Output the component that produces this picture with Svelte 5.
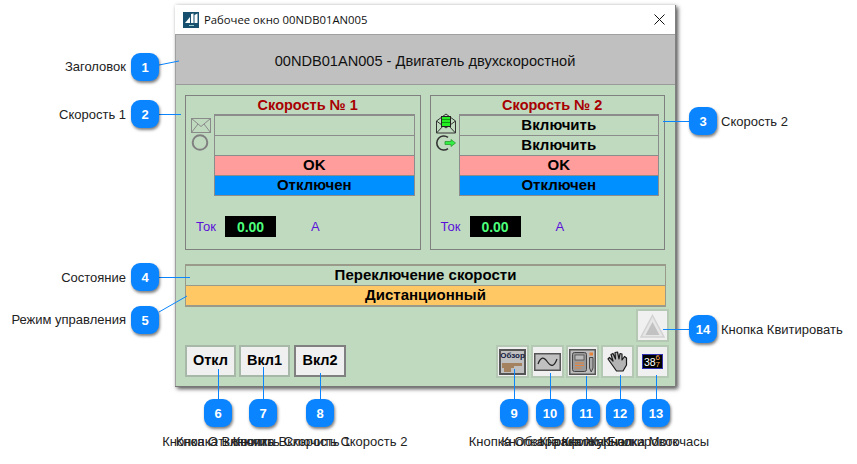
<script lang="ts">
  const speeds = [
    { title: 'Скорость № 1', rows: ['', ''], active: false },
    { title: 'Скорость № 2', rows: ['Включить', 'Включить'], active: true },
  ];

  const badges = [
    { n: 1, x: 145, y: 67 }, { n: 2, x: 145, y: 114 }, { n: 3, x: 703, y: 121 },
    { n: 4, x: 145, y: 277 }, { n: 5, x: 145, y: 320 }, { n: 6, x: 218, y: 413 },
    { n: 7, x: 263, y: 413 }, { n: 8, x: 320, y: 413 }, { n: 9, x: 514, y: 413 },
    { n: 10, x: 550, y: 413 }, { n: 11, x: 586, y: 413 }, { n: 12, x: 620, y: 413 },
    { n: 13, x: 656, y: 413 }, { n: 14, x: 703, y: 329 },
  ];

  const leaders = [
    [159, 65, 179, 61], [159, 114.5, 181, 114.5], [689, 121.5, 663, 121.5],
    [159, 277.5, 190, 277.5], [159, 312, 187, 296], [218.5, 399, 218.5, 369],
    [263.5, 399, 263.5, 367], [320.5, 399, 320.5, 373], [514.5, 399, 514.5, 369],
    [550.5, 399, 550.5, 373], [586.5, 399, 586.5, 376], [620.5, 399, 620.5, 375],
    [656.5, 399, 656.5, 375], [689, 329.5, 663, 329.5],
  ];

  const sideLabels = [
    { text: 'Заголовок', right: 731, y: 67 },
    { text: 'Скорость 1', right: 731, y: 115 },
    { text: 'Состояние', right: 731, y: 278 },
    { text: 'Режим управления', right: 731, y: 320 },
  ];

  const bottomLabels = [
    { text: 'Кнопка Отключить', x: 218 },
    { text: 'Кнопка Включить Скорость 1', x: 263 },
    { text: 'Кнопка Включить Скорость 2', x: 320 },
    { text: 'Кнопка Обзора', x: 514 },
    { text: 'Кнопка Графики', x: 550 },
    { text: 'Кнопка Журнал', x: 586 },
    { text: 'Кнопка Блокировок', x: 620 },
    { text: 'Кнопка Моточасы', x: 656 },
  ];
</script>

<div class="page">
  <div class="window">
    <div class="titlebar">
      <svg class="app-icon" viewBox="0 0 16 16" aria-hidden="true">
        <rect width="16" height="16" fill="#17506f" />
        <path d="M2 11 L7 5 V11 Z M8 11 V2 L10.5 1.500 V11 Z M11.5 11 V3 L14.500 1.500 V11 Z" fill="#fff" />
        <rect x="6" y="13" width="5" height="1" fill="#9cc" />
      </svg>
      <span class="title-text">Рабочее окно 00NDB01AN005</span>
      <svg class="close" viewBox="0 0 11 11" aria-hidden="true">
        <path d="M0.5 0.5 L10.5 10.5 M10.5 0.5 L0.5 10.5" stroke="#111" stroke-width="1" fill="none" />
      </svg>
    </div>

    <div class="header">00NDB01AN005 - Двигатель двухскоростной</div>

    <div class="body">
      <div class="panels">
        {#each speeds as s}
          <section class="panel">
            <h2>{s.title}</h2>
            <div class="panel-main">
              <div class="icons">
                {#if s.active}
                  <svg class="mail-on" width="22" height="21" viewBox="0 0 22 21" aria-hidden="true">
                    <path d="M1.500 8 L11 1 L20.500 8 V20 H1.500 Z M1.500 20 L9 12 M20.500 20 L13 12 M1.500 8 L11 15 L20.500 8" fill="none" stroke="#333" stroke-width="1" />
                    <rect x="6.500" y="3.500" width="9" height="10" fill="#22ee22" stroke="#222" />
                    <path d="M7 6.500 H15 M7 9.500 H15" stroke="#119911" />
                  </svg>
                  <svg class="run-on" width="22" height="16" viewBox="0 0 22 16" aria-hidden="true">
                    <path d="M13 2.400 A7 7 0 1 0 13 13.600" fill="none" stroke="#333" stroke-width="1.600" />
                    <path d="M10 6.500 H16 V4.500 L20.500 8 L16 11.500 V9.500 H10 Z" fill="#33ee44" stroke="#2a9a2a" stroke-width="0.800" />
                  </svg>
                {:else}
                  <svg width="22" height="16" viewBox="0 0 22 16" aria-hidden="true">
                    <rect x="1.500" y="0.500" width="19" height="14" fill="none" stroke="#8a8a8a" />
                    <path d="M1.500 0.500 L11 8.500 L20.500 0.500 M1.500 14.500 L8 6 M20.500 14.500 L14 6" fill="none" stroke="#8a8a8a" />
                  </svg>
                  <svg class="circle" width="18" height="17" viewBox="0 0 18 17" aria-hidden="true">
                    <circle cx="9" cy="8.500" r="7.300" fill="none" stroke="#808080" stroke-width="2" />
                  </svg>
                {/if}
              </div>
              <div class="rows">
                {#each s.rows as r}
                  <div class="row">{r}</div>
                {/each}
                <div class="row ok">OK</div>
                <div class="row off">Отключен</div>
              </div>
            </div>
            <div class="current">
              <span class="cur-label">Ток</span>
              <span class="cur-value">0.00</span>
              <span class="cur-unit">А</span>
            </div>
          </section>
        {/each}
      </div>

      <div class="status">
        <div class="status-row">Переключение скорости</div>
        <div class="status-row mode">Дистанционный</div>
      </div>

      <div class="ack-line">
        <button class="tool ack" aria-label="Квитировать">
          <svg width="25" height="24" viewBox="0 0 25 24" aria-hidden="true">
            <path d="M12.500 1.500 L24 23 H1 Z" fill="#e6e6e6" stroke="#d2d2d2" stroke-width="1.500" />
            <path d="M12.500 8 L19.500 21 H5.500 Z" fill="#c2c2c2" />
          </svg>
        </button>
      </div>

      <div class="controls">
        <div class="cmds">
          <button class="cmd">Откл</button>
          <button class="cmd">Вкл1</button>
          <button class="cmd dark">Вкл2</button>
        </div>
        <div class="tools">
          <button class="tool" aria-label="Обзор">
            <span class="overview">
              <span class="overview-text">Обзор</span>
              <svg width="23" height="12" viewBox="0 0 23 12" aria-hidden="true">
                <path d="M1 2 H21 V5 H13 V7 H10 V11 H3 V7 H1 Z" fill="#a5825f" />
              </svg>
            </span>
          </button>
          <button class="tool" aria-label="Графики">
            <svg width="27" height="18" viewBox="0 0 27 18" aria-hidden="true">
              <rect x="0.750" y="0.750" width="25.500" height="16.500" fill="#c0c0c0" stroke="#555" stroke-width="1.500" />
              <path d="M4 11 C7 3 10 4 13.500 9 C17 14 20 14 23 6" fill="none" stroke="#222" stroke-width="1.200" />
            </svg>
          </button>
          <button class="tool" aria-label="Журнал">
            <svg width="27" height="26" viewBox="0 0 27 26" aria-hidden="true">
              <rect x="0.750" y="0.750" width="25.500" height="24.500" fill="#bdbdbd" stroke="#555" stroke-width="1.500" />
              <rect x="3.500" y="3.500" width="14" height="19" rx="2" fill="#999" stroke="#444" />
              <rect x="6" y="6" width="9" height="5" fill="#bbb" stroke="#444" stroke-width="0.700" />
              <path d="M6 14 H15 M6 16.500 H15 M6 19 H12" stroke="#e8823a" stroke-width="1" />
              <path d="M20.500 8.500 H24 V19 L22.250 23 L20.500 19 Z" fill="#aaa" stroke="#444" />
              <rect x="20.500" y="3.500" width="3.500" height="3" fill="#e8823a" />
            </svg>
          </button>
          <button class="tool" aria-label="Блокировка">
            <svg width="21" height="21" viewBox="0 0 21 21" aria-hidden="true">
              <path d="M1 8 L2.500 6.500 L6 10 L4 3.500 L6 2.500 L8.500 8 L8 1.500 L10.500 1 L12 8 L13 2.500 L15 3 L15 9 L17.500 5.500 L19.500 7 L19.500 14 L16 20 H9.500 L6 15 Z" fill="#b4b4b4" stroke="#1a1a1a" stroke-width="1.200" stroke-linejoin="round" />
            </svg>
          </button>
          <button class="tool" aria-label="Моточасы">
            <span class="hours">38<span class="hours-frac"><span>6</span><span>7</span></span></span>
          </button>
        </div>
      </div>
    </div>
  </div>

  <svg class="leaders" width="857" height="464" aria-hidden="true">
    {#each leaders as l}
      <line x1={l[0]} y1={l[1]} x2={l[2]} y2={l[3]} stroke="#0a84ff" stroke-width="1" />
    {/each}
  </svg>

  {#each sideLabels as l}
    <span class="side-label" style="right:{l.right}px;top:{l.y - 8}px">{l.text}</span>
  {/each}
  <span class="side-label" style="left:721px;top:114px">Скорость 2</span>
  <span class="side-label" style="left:721px;top:322px">Кнопка Квитировать</span>

  {#each bottomLabels as l}
    <span class="bottom-label" style="left:{l.x}px">{l.text}</span>
  {/each}

  {#each badges as b}
    <span class="badge" style="left:{b.x - 14}px;top:{b.y - 14}px">{b.n}</span>
  {/each}
</div>

<style>
  :global(body) {
    margin: 0;
    background: #fff;
  }

  .page {
    position: relative;
    width: 857px;
    height: 464px;
    overflow: hidden;
    font-family: "Liberation Sans", Arial, sans-serif;
    padding: 5px 0 0 175px;
    box-sizing: border-box;
  }

  .window {
    width: 501px;
    height: 382px;
    display: flex;
    flex-direction: column;
    background: #fff;
    box-shadow: 2px 2px 4px rgba(0, 0, 0, 0.65), 0 -1px 3px rgba(0, 0, 0, 0.08);
    border-right: 1px solid #808080;
    box-sizing: border-box;
  }

  .titlebar {
    height: 30px;
    display: flex;
    align-items: center;
    padding: 0 10px 0 8px;
    flex: none;
    border-bottom: 1px solid #a0a0a0;
    box-sizing: border-box;
  }

  .app-icon {
    width: 16px;
    height: 16px;
    margin-right: 5px;
  }

  .title-text {
    flex: 1;
    font-family: "Open Sans", "Noto Sans", sans-serif;
    font-size: 11.300px;
    color: #111;
  }

  .close {
    width: 11px;
    height: 11px;
  }

  .header {
    height: 50px;
    flex: none;
    background: #c0c0c0;
    border-bottom: 1px solid #9a9a9a;
    box-sizing: border-box;
    display: flex;
    align-items: center;
    justify-content: center;
    font-size: 14.600px;
    color: #111;
    padding-top: 2px;
    box-shadow: inset 1px 0 0 #a0a0a0;
  }

  .body {
    flex: 1;
    background: #c0dac0;
    padding: 10px 10px 0;
    display: flex;
    flex-direction: column;
    border-bottom: 1px solid #777;
    box-shadow: inset 1px 0 0 #a0a0a0;
  }

  .panels {
    display: flex;
    gap: 9px;
  }

  .panel {
    width: 236px;
    height: 155px;
    box-sizing: border-box;
    border: 1px solid #808080;
    padding: 0 5px 0 4px;
  }

  h2 {
    margin: 0;
    height: 19px;
    text-align: center;
    font-size: 14.500px;
    line-height: 18px;
    font-weight: bold;
    color: #a80000;
    padding-left: 11px;
  }

  .panel-main {
    display: flex;
  }

  .icons {
    width: 24px;
    flex: none;
    display: flex;
    flex-direction: column;
    align-items: flex-start;
    padding-top: 3px;
  }

  .icons .circle {
    margin: 0 0 0 1px;
  }

  .icons .mail-on {
    margin-top: -5px;
  }

  .icons .run-on {
    margin-top: 1px;
  }

  .rows {
    flex: 1;
    display: flex;
    flex-direction: column;
    border: 1px solid #8c8c8c;
    border-top-width: 2px;
    margin-top: -1px;
  }

  .row {
    height: 17px;
    padding-bottom: 2px;
    border-bottom: 1px solid #8c8c8c;
    display: flex;
    align-items: center;
    justify-content: center;
    font-size: 15px;
    line-height: 17px;
    font-weight: bold;
    color: #000;
  }

  .row:last-child {
    border-bottom: 0;
  }

  .ok {
    background: #ff9c9c;
  }

  .off {
    background: #0090ff;
  }

  .current {
    display: flex;
    align-items: center;
    margin-top: 20px;
    padding-left: 6px;
    font-size: 13px;
    color: #5a10d8;
  }

  .cur-label {
    width: 29px;
  }

  .cur-value {
    width: 51px;
    height: 21px;
    background: #000;
    color: #4dff7c;
    font-size: 14px;
    font-weight: bold;
    display: flex;
    align-items: center;
    justify-content: center;
  }

  .cur-unit {
    margin-left: 35px;
  }

  .status {
    margin-top: 14px;
    width: 481px;
    box-sizing: border-box;
    border: 1px solid #9a9a8a;
    border-width: 2px 1px;
  }

  .status-row {
    height: 17px;
    padding-bottom: 2px;
    display: flex;
    align-items: center;
    justify-content: center;
    font-size: 15px;
    line-height: 17px;
    font-weight: bold;
    color: #000;
    border-bottom: 1px solid #9a9a8a;
  }

  .status-row:last-child {
    border-bottom: 0;
  }

  .mode {
    background: #ffc864;
  }

  .ack-line {
    display: flex;
    justify-content: flex-end;
    margin: 2px -4px 0 0;
    height: 33px;
  }

  .controls {
    display: flex;
    justify-content: space-between;
    margin: 3px -4px 0 0;
  }

  .cmds,
  .tools {
    display: flex;
  }

  .cmds {
    gap: 3px;
  }

  .tools {
    gap: 2px;
  }

  button {
    padding: 0;
    margin: 0;
    font-family: inherit;
    box-sizing: border-box;
    background: #f0f0f0;
    border: 2px solid #a8b8a8;
    display: flex;
    align-items: center;
    justify-content: center;
  }

  .cmd {
    width: 51px;
    height: 32px;
    font-size: 14.500px;
    font-weight: bold;
    color: #000;
    padding-bottom: 2px;
  }

  .cmd.dark {
    width: 52px;
    margin-left: 1px;
    border-color: #808080;
  }

  .tool {
    width: 33px;
    height: 33px;
    border-color: #b4c8b4;
  }

  .overview {
    width: 27px;
    height: 26px;
    box-sizing: border-box;
    background: #c0c0c0;
    border: 2px solid #555;
    display: flex;
    flex-direction: column;
    align-items: center;
  }

  .overview-text {
    font-size: 8px;
    line-height: 10px;
    font-weight: bold;
    color: #101840;
  }

  .hours {
    width: 21px;
    height: 15px;
    box-sizing: border-box;
    border: 1px solid #3030b0;
    background: #000;
    color: #fff;
    font-size: 10.500px;
    display: flex;
    align-items: center;
    justify-content: center;
    margin-left: -1px;
  }

  .hours-frac {
    display: flex;
    flex-direction: column;
    font-size: 8px;
    line-height: 6.500px;
    color: #ffb060;
  }

  .leaders {
    position: absolute;
    left: 0;
    top: 0;
  }

  .side-label {
    position: absolute;
    font-size: 13px;
    line-height: 16px;
    color: #222;
    white-space: nowrap;
  }

  .bottom-label {
    position: absolute;
    top: 434px;
    transform: translateX(-50%);
    font-size: 13px;
    line-height: 16px;
    color: #222;
    white-space: nowrap;
  }

  .badge {
    position: absolute;
    width: 28px;
    height: 28px;
    border-radius: 9px;
    background: #0a84ff;
    color: #fff;
    font-size: 13px;
    font-weight: bold;
    display: flex;
    align-items: center;
    justify-content: center;
    box-shadow: 1px 2px 3px rgba(0, 0, 0, 0.5);
  }
</style>
